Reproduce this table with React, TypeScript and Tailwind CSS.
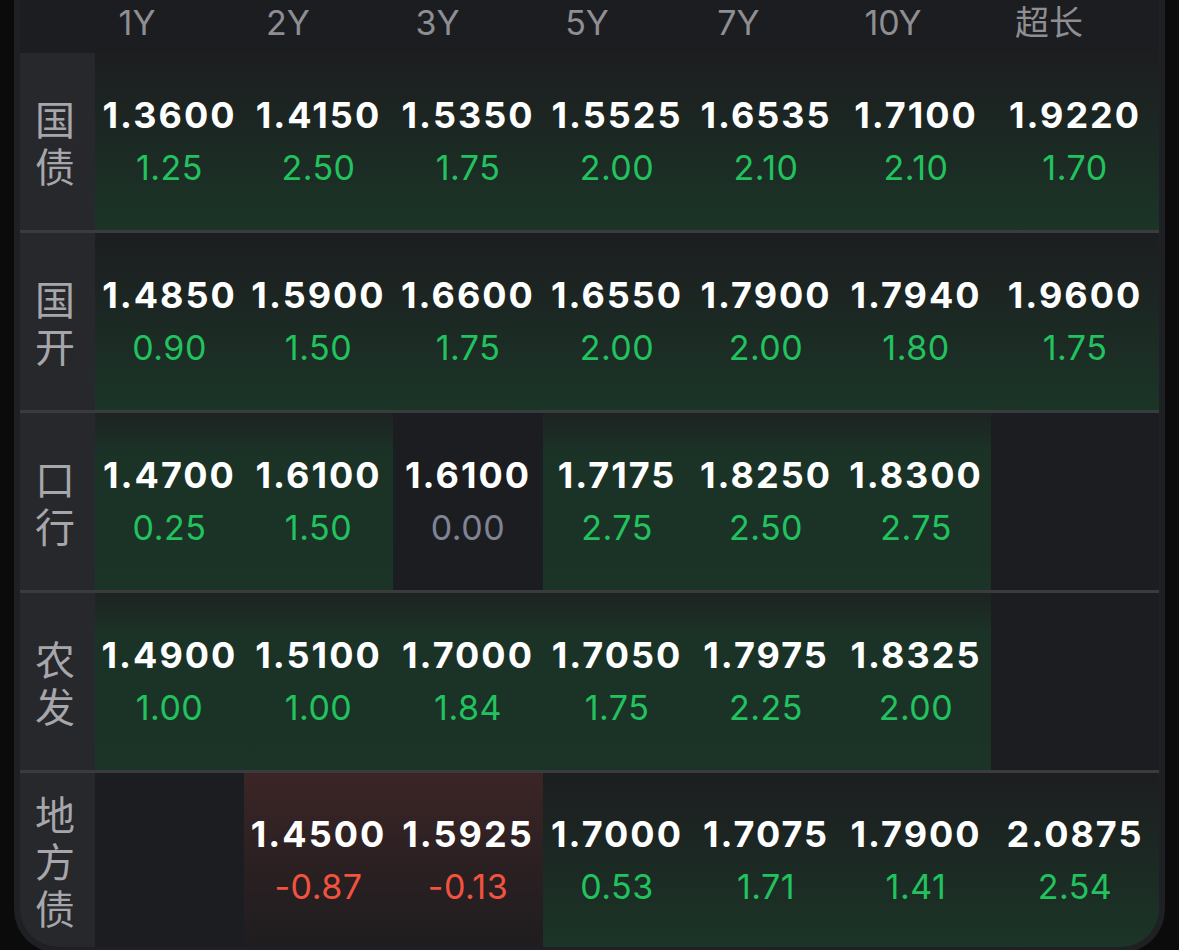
import React from 'react';

type Tone = 'up' | 'down' | 'flat';
type Cell = { v: string; d: string; t: Tone } | null;

const headers = ['1Y', '2Y', '3Y', '5Y', '7Y', '10Y', '超长'];

const rows: { label: string; strong?: boolean; cells: Cell[] }[] = [
  {
    label: '国\n债',
    cells: [
      { v: '1.3600', d: '1.25', t: 'up' },
      { v: '1.4150', d: '2.50', t: 'up' },
      { v: '1.5350', d: '1.75', t: 'up' },
      { v: '1.5525', d: '2.00', t: 'up' },
      { v: '1.6535', d: '2.10', t: 'up' },
      { v: '1.7100', d: '2.10', t: 'up' },
      { v: '1.9220', d: '1.70', t: 'up' },
    ],
  },
  {
    label: '国\n开',
    cells: [
      { v: '1.4850', d: '0.90', t: 'up' },
      { v: '1.5900', d: '1.50', t: 'up' },
      { v: '1.6600', d: '1.75', t: 'up' },
      { v: '1.6550', d: '2.00', t: 'up' },
      { v: '1.7900', d: '2.00', t: 'up' },
      { v: '1.7940', d: '1.80', t: 'up' },
      { v: '1.9600', d: '1.75', t: 'up' },
    ],
  },
  {
    label: '口\n行',
    strong: true,
    cells: [
      { v: '1.4700', d: '0.25', t: 'up' },
      { v: '1.6100', d: '1.50', t: 'up' },
      { v: '1.6100', d: '0.00', t: 'flat' },
      { v: '1.7175', d: '2.75', t: 'up' },
      { v: '1.8250', d: '2.50', t: 'up' },
      { v: '1.8300', d: '2.75', t: 'up' },
      null,
    ],
  },
  {
    label: '农\n发',
    strong: true,
    cells: [
      { v: '1.4900', d: '1.00', t: 'up' },
      { v: '1.5100', d: '1.00', t: 'up' },
      { v: '1.7000', d: '1.84', t: 'up' },
      { v: '1.7050', d: '1.75', t: 'up' },
      { v: '1.7975', d: '2.25', t: 'up' },
      { v: '1.8325', d: '2.00', t: 'up' },
      null,
    ],
  },
  {
    label: '地\n方\n债',
    cells: [
      null,
      { v: '1.4500', d: '-0.87', t: 'down' },
      { v: '1.5925', d: '-0.13', t: 'down' },
      { v: '1.7000', d: '0.53', t: 'up' },
      { v: '1.7075', d: '1.71', t: 'up' },
      { v: '1.7900', d: '1.41', t: 'up' },
      { v: '2.0875', d: '2.54', t: 'up' },
    ],
  },
];

const font = { fontFamily: 'Inter, "Noto Sans CJK SC", sans-serif' };

function bgFor(cell: Cell, strong?: boolean) {
  if (!cell || cell.t === 'flat') return 'bg-[#1c1d20]';
  if (cell.t === 'down') return 'bg-[linear-gradient(to_bottom,#3c2526_0%,#2a2022_55%,#1f1d1f_100%)]';
  if (strong) return 'bg-[linear-gradient(to_bottom,#1d2321_0%,#1b3227_22%,#1b3427_100%)]';
  return 'bg-[linear-gradient(to_bottom,#1c1e20_0%,#1c2422_30%,#1b3527_100%)]';
}

function colorFor(t: Tone) {
  if (t === 'down') return 'text-[#f3533e]';
  if (t === 'flat') return 'text-[#7e8494]';
  return 'text-[#22c25f]';
}

const Quote: React.FC<{ cell: Cell; strong?: boolean }> = ({ cell, strong }) => (
  <div className={`flex flex-col items-center justify-center ${bgFor(cell, strong)}`}>
    {cell && (
      <>
        <span className="text-[36px] leading-[40px] font-bold text-white tracking-[2px]">{cell.v}</span>
        <span className={`mt-[13px] text-[34px] leading-[40px] font-normal tracking-[0.5px] ${colorFor(cell.t)}`}>
          {cell.d}
        </span>
      </>
    )}
  </div>
);

export default function App() {
  return (
    <div className="w-[1179px] h-[950px] overflow-hidden bg-[#0b0b0b] pl-[14px]" style={font}>
      <div className="w-[1151px] border-x-[6px] border-b-[6px] border-[#1f2023] rounded-b-[44px] overflow-hidden bg-[#1c1d20]">
        <div className="h-[53px] grid grid-cols-[41px_152px_150px_149px_150px_153px_156px_156px] bg-[#1c1d20]">
          <div />
          {headers.map((h) => (
            <div key={h} className="text-center pt-[6px] text-[34px] leading-none text-[#8e8e93]">
              {h}
            </div>
          ))}
        </div>
        {rows.map((row, i) => (
          <React.Fragment key={i}>
            {i > 0 && <div className="h-[3px] bg-[#3a3b3f]" />}
            <div
              className={`grid grid-cols-[75px_149px_149px_150px_148px_150px_150px_1fr] ${
                i === rows.length - 1 ? 'h-[174px]' : 'h-[177px]'
              }`}
            >
              <div className="flex items-center justify-center pr-[5px] bg-[#27282c] text-[#a6a6ab]">
                <span
                  className="whitespace-pre-line text-center text-[40px] leading-[47px]"
                  style={{ fontFamily: '"Noto Sans CJK SC", sans-serif' }}
                >
                  {row.label}
                </span>
              </div>
              {row.cells.map((c, j) => (
                <Quote key={j} cell={c} strong={row.strong} />
              ))}
            </div>
          </React.Fragment>
        ))}
      </div>
    </div>
  );
}
